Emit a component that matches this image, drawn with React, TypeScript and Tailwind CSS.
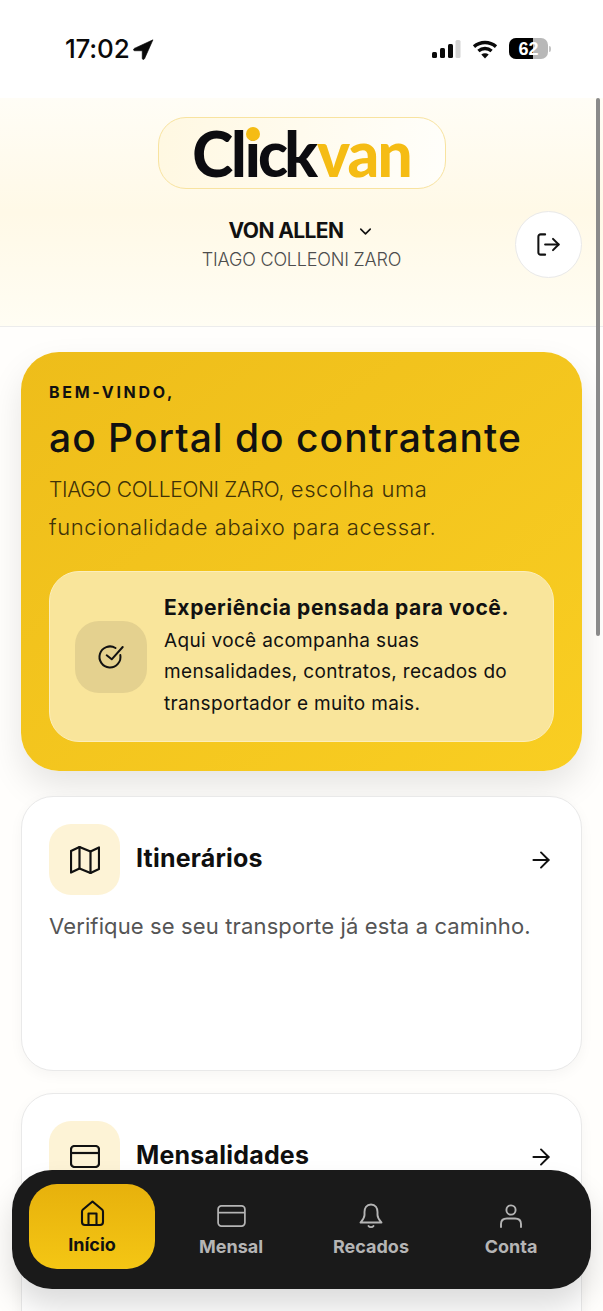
import { ArrowRight, ChevronDown, LogOut } from "lucide-react";

const ui = "font-['Inter','Liberation_Sans',sans-serif]";

function CardIcon({ w, h, sw }: { w: number; h: number; sw: number }) {
  return (
    <svg width={w} height={h} viewBox="0 0 30 23" fill="none" stroke="currentColor" strokeWidth={sw}>
      <rect x="1" y="1" width="28" height="21" rx="3.500" />
      <path d="M1 8h28" />
    </svg>
  );
}

function NavItem({ label, icon }: { label: string; icon: React.ReactNode }) {
  return (
    <div className="flex w-[140px] flex-col items-center pt-[19px] text-[#b5b5b5]">
      <div className="flex h-[26px] items-center justify-center">{icon}</div>
      <span className="mt-[7px] text-[18px] leading-[22px] font-bold">{label}</span>
    </div>
  );
}

function Card({ title, text, icon, className }: { title: string; text?: string; icon: React.ReactNode; className?: string }) {
  return (
    <section className={`shrink-0 rounded-[32px] border border-[#e9e9e9] bg-white px-[27px] pt-[27px] shadow-[0_4px_14px_rgba(0,0,0,0.04)] ${className ?? ""}`}>
      <div className="flex items-center">
        <div className="flex size-[71px] items-center justify-center rounded-[22px] bg-[#fdf3d6] text-[#111]">{icon}</div>
        <h2 className="mb-[3px] ml-[16px] flex-1 text-[25px] leading-[32px] font-bold tracking-[0.2px] text-[#0f0f0f]">{title}</h2>
        <ArrowRight size={26} strokeWidth={1.800} className="text-[#111]" />
      </div>
      {text && <p className="mt-[16px] text-[22px] leading-[30px] tracking-[0.13px] text-[#555]">{text}</p>}
    </section>
  );
}

export default function App() {
  return (
    <div className={`relative flex h-[1311px] w-[603px] flex-col overflow-hidden bg-[#fffefc] ${ui}`}>
      <div className="flex h-[98px] shrink-0 items-start justify-between bg-white pt-[33px] pr-[52px] pl-[65px]">
        <div className="flex items-center gap-[4px] text-[#0a0a0a]">
          <span className="text-[26px] leading-[32px] font-medium tracking-[-0.2px]">17:02</span>
          <svg width="21" height="21" viewBox="0 0 20 20" className="mt-[1px]"><path d="M19 .8 1.200 9c-1.200.6-.8 2.200.5 2.200h7.100v7.100c0 1.300 1.700 1.600 2.200.4z" fill="#0a0a0a" stroke="#0a0a0a" strokeWidth="0.600" /></svg>
        </div>
        <div className="mt-[5px] flex items-center gap-[11px]">
          <svg width="30" height="20" viewBox="0 0 30 20">
            <rect x="1" y="13" width="5" height="6" rx="1.500" fill="#0a0a0a" />
            <rect x="9" y="9" width="5" height="10" rx="1.500" fill="#0a0a0a" />
            <rect x="17" y="5" width="5" height="14" rx="1.500" fill="#0a0a0a" />
            <rect x="24.500" y="1" width="5" height="18" rx="1.500" fill="#d4d4d4" />
          </svg>
          <svg width="26" height="20" viewBox="0 0 26 20" fill="none" stroke="#0a0a0a" strokeWidth="3.400">
            <path d="M2 7.600c6.300-5.500 15.700-5.500 22 0" />
            <path d="M6.400 12c3.900-3.300 9.300-3.300 13.200 0" />
            <path d="M13 19.500 9.300 15.500c2.100-1.700 5.300-1.700 7.400 0z" fill="#0a0a0a" stroke="none" />
          </svg>
          <div className="flex items-center">
            <div className="relative flex h-[21px] w-[39px] items-center justify-center overflow-hidden rounded-[7px] bg-[#b8b8b8] font-['Liberation_Sans',sans-serif] text-[18px] leading-none font-bold text-white">
              <div className="absolute inset-y-0 left-0 w-[24px] bg-black" />
              <span className="relative">62</span>
            </div>
            <div className="ml-[1px] h-[6px] w-[2px] rounded-r-full bg-[#c4c4c4]" />
          </div>
        </div>
      </div>

      <header className="relative flex h-[229px] shrink-0 flex-col items-center border-b border-[#ececec] bg-gradient-to-b from-[#fffdf6] via-[#fff9e7] to-[#fffdf3] pt-[19px]">
        <div className="relative flex h-[72px] w-[288px] items-center justify-center rounded-[28px] border border-[#f8e3a0] bg-gradient-to-r from-[#fff8e2] to-[#fffefa] font-['Lato',sans-serif] text-[62px] leading-none font-black tracking-[-1.800px]">
          <span className="text-[#0c0c10]">
            <span className="tracking-[-2px]">Cl</span>
            <span className="relative tracking-[-3px]">
              i
              <span className="absolute top-[11px] left-[1.500px] size-[14px] rounded-full bg-[#f5bc14]" />
            </span>
            <span className="tracking-[-3.800px]">c</span>
            <span className="tracking-[-1px]">k</span>
          </span>
          <span className="text-[#f5bc14]">van</span>
        </div>
        <div className="mt-[27px] flex items-center gap-[13px] pl-[1px] text-[#111]">
          <span className="text-[21px] leading-[30px] font-bold tracking-[-0.6px]">VON ALLEN</span>
          <ChevronDown size={19} strokeWidth={2} />
        </div>
        <p className="mt-[1px] text-[18px] leading-[26px] font-light tracking-[-0.2px] text-[#4d4d4d]">TIAGO COLLEONI ZARO</p>
        <button className="absolute top-[113px] left-[515px] flex h-[67px] w-[67px] items-center justify-center rounded-full border border-[#e9e9e9] bg-white text-[#111]">
          <LogOut size={27} strokeWidth={1.800} />
        </button>
      </header>

      <main className="flex flex-col px-[21px] pt-[25px]">
        <section className="h-[419px] shrink-0 rounded-[38px] bg-gradient-to-br from-[#eebd1a] to-[#f9ce22] px-[28px] pt-[28px] shadow-[0_16px_34px_rgba(0,0,0,0.10)]">
          <p className="text-[16px] leading-[24px] font-bold tracking-[2.700px] text-[#111]">BEM-VINDO,</p>
          <h1 className="mt-[11px] text-[39px] leading-[46px] font-medium tracking-[1px] whitespace-nowrap text-[#111]">ao Portal do contratante</h1>
          <p className="mt-[10px] text-[22px] leading-[37.500px] font-light tracking-[0.6px] whitespace-nowrap text-[#3f3208]">
            <span className="text-[21px] tracking-[-0.35px]">TIAGO COLLEONI ZARO,</span> escolha uma
            <br />
            funcionalidade abaixo para acessar.
          </p>
          <div className="mt-[25px] flex h-[171px] items-center rounded-[30px] border border-[#fceebb] bg-[#f9e59b] pl-[25px]">
            <div className="flex h-[72px] w-[72px] shrink-0 items-center justify-center rounded-[24px] bg-[#e4d18f] text-[#111]">
              <svg width="28" height="26" viewBox="0 0 28 26" fill="none" stroke="currentColor" strokeWidth="2" strokeLinecap="round" strokeLinejoin="round">
                <path d="M23.300 11A10.500 10.500 0 1 1 18.500 4" />
                <path d="M9.700 11.300 14.700 15.300 25.700 3" />
              </svg>
            </div>
            <div className="ml-[17px] whitespace-nowrap text-[#111]">
              <p className="text-[21px] leading-[28px] font-bold tracking-[0.6px]">Experiência pensada para você.</p>
              <p className="mt-[3px] text-[19px] leading-[31.500px] tracking-[0.33px]">
                Aqui você acompanha suas
                <br />
                mensalidades, contratos, recados do
                <br />
                transportador e muito mais.
              </p>
            </div>
          </div>
        </section>
        <Card
          className="mt-[25px] h-[275px]"
          title="Itinerários"
          text="Verifique se seu transporte já esta a caminho."
          icon={
            <svg width="30" height="28" viewBox="0 0 30 28" fill="none" stroke="currentColor" strokeWidth="2.200" strokeLinejoin="round" strokeLinecap="round">
              <path d="M1 5 9.500 1 20.500 5.500 29 1.500V23l-8.500 4-11-4.500L1 26.500z" />
              <path d="M9.500 1v21.500M20.500 5.500V27" />
            </svg>
          }
        />
        <Card className="mt-[22px] h-[275px]" title="Mensalidades" icon={<CardIcon w={30} h={23} sw={2.200} />} />
      </main>

      <div className="absolute top-[98px] left-[596px] h-[538px] w-[4px] rounded-full bg-[#8a8a8a]" />

      <nav className="absolute top-[1170px] left-[12px] flex h-[119px] w-[579px] items-start rounded-[40px] bg-[#1a1a1a] pt-[14px] pl-[17px] shadow-[0_18px_30px_rgba(0,0,0,0.14)]">
        <div className="mr-[6px] flex h-[85px] w-[126px] flex-col items-center rounded-[28px] bg-gradient-to-b from-[#e7b10c] to-[#f4c614] pt-[16px] text-[#111]">
          <svg width="25" height="27" viewBox="0 0 25 27" fill="none" stroke="currentColor" strokeWidth="2.100" strokeLinejoin="round">
            <path d="M12.500 1.500 3 9.500c-.7.6-1 1.300-1 2.200V22c0 2 1 3 3 3h15c2 0 3-1 3-3V11.700c0-.9-.3-1.600-1-2.200z" />
            <path d="M8.500 25V13.500h8V25" />
          </svg>
          <span className="mt-[7px] text-[18px] leading-[22px] font-bold">Início</span>
        </div>
        <NavItem label="Mensal" icon={<CardIcon w={29} h={22} sw={1.800} />} />
        <NavItem
          label="Recados"
          icon={
            <svg width="24" height="26" viewBox="0 0 24 26" fill="none" stroke="currentColor" strokeWidth="1.900" strokeLinejoin="round" strokeLinecap="round">
              <path d="M12 1.500C7.500 1.500 5.500 5 5.500 9v3c0 3-2 5-4 7.500h21c-2-2.500-4-4.500-4-7.500V9c0-4-2-7.500-6.500-7.500z" />
              <path d="M9.500 23c1 1.500 4 1.500 5 0" />
            </svg>
          }
        />
        <NavItem
          label="Conta"
          icon={
            <svg width="24" height="26" viewBox="0 0 24 26" fill="none" stroke="currentColor" strokeWidth="1.900" strokeLinecap="round">
              <circle cx="12" cy="7" r="4.600" />
              <path d="M2 24v-3c0-3.500 2-5.500 6-5.500h8c4 0 6 2 6 5.500v3" />
            </svg>
          }
        />
      </nav>
    </div>
  );
}
